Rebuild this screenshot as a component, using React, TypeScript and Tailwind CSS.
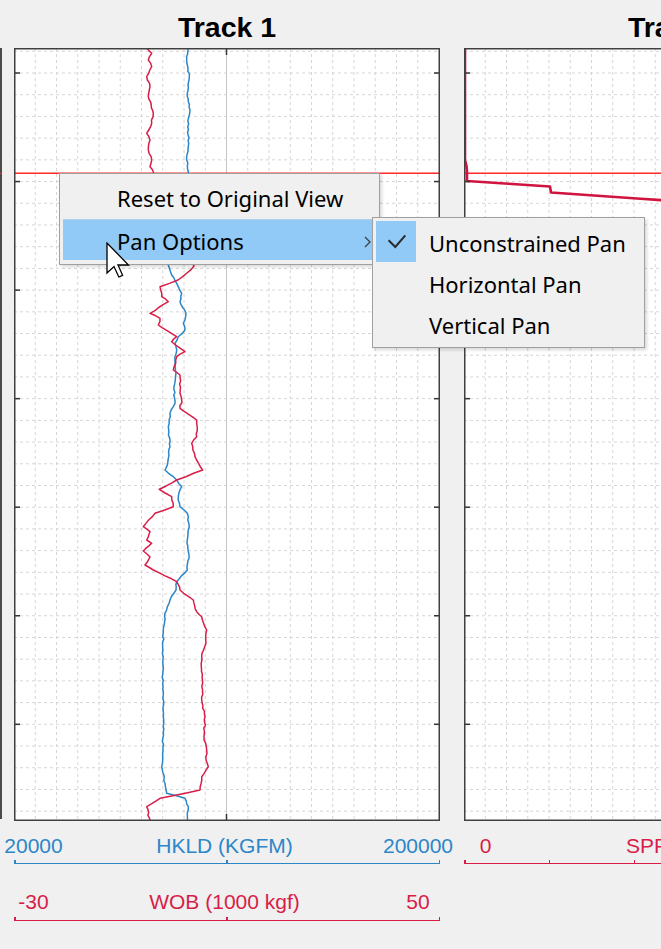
import React from "react";

type Pt = [number, number];

const W = 426;
const H = 773;

// traced from the log, page coordinates
const wob: Pt[] = [
  [146.7, 48], [151.7, 53.3], [148.3, 60], [151.7, 66.7], [146.7, 76.7], [150, 86.7], [148.3, 96.7],
  [153.3, 113.3], [151.7, 123.3], [146.7, 133.3], [150, 140], [148.3, 150], [151.7, 160], [150, 166.7],
  [153.3, 171.7], [160, 200], [185, 240], [194, 266], [186.7, 273.3], [178, 280], [160, 286.7],
  [161.7, 296.7], [168.3, 301.7], [150, 313.3], [160, 318.3], [158.3, 325], [176.7, 336.7], [171.7, 341.7],
  [185, 351.7], [176.7, 356.7], [173.3, 370], [180, 375], [180, 393.3], [181.7, 400], [180, 408.3],
  [196.7, 420], [196.7, 436.7], [191.7, 443.3], [195, 456.7], [202.7, 470], [176.7, 480], [159.3, 489.3],
  [171.7, 496.7], [173.3, 506.7], [155, 513.3], [143.3, 526.7], [150, 531.7], [146.7, 540], [151.7, 543.3],
  [143.3, 551], [150, 557], [145, 565], [153.3, 570], [176.7, 581.7], [180, 590], [193.3, 600],
  [196.7, 611.7], [201.7, 616.7], [206.7, 630], [206, 643.3], [201.7, 656.7], [202.7, 683.3], [201.7, 700],
  [205, 716.7], [204, 736.7], [206.7, 750], [206, 760], [208.3, 766.7], [201.7, 776.7], [200, 790],
  [176.7, 795], [160, 798.3], [146.7, 806.7], [150, 821],
];

const hkld: Pt[] = [
  [188.3, 48], [186.7, 60], [189.3, 76.7], [187.3, 93.3], [190, 110], [187.7, 126.7], [188.7, 143.3],
  [186.7, 160], [188.3, 171.7], [185, 200], [175, 240], [168.3, 265], [171.7, 275], [176.7, 283.3],
  [181.7, 293.3], [180, 301.7], [186, 313.3], [183.3, 323.3], [185, 330], [178.3, 336.7], [175, 343.3],
  [176.7, 350], [175, 360], [176, 373.3], [174, 386.7], [175, 403.3], [170, 413.3], [168.3, 426.7],
  [170, 446.7], [166.7, 466.7], [165, 470], [176.7, 480], [181.7, 486.7], [178.3, 496.7], [180, 506.7],
  [187.3, 513.3], [189.3, 526.7], [187.3, 540], [189, 555], [187.3, 570], [176.7, 581.7], [176, 590],
  [170, 600], [165, 613.3], [163.3, 633.3], [162.7, 683.3], [163.3, 716.7], [162.7, 756.7], [161.7, 766.7],
  [165, 783.3], [166.7, 793.3], [185, 798.3], [188.3, 806.7], [187.3, 821],
];

const spp: Pt[] = [
  [465, 48], [465, 160], [466.5, 166], [467, 172], [467, 181], [550, 186.5], [551, 192.5], [680, 201.5],
];

// fill in small jitter between traced points so the traces look sampled
function trace(pts: Pt[], seed: number, jitter: number) {
  let s = seed;
  const rnd = () => {
    s = (s * 9301 + 49297) % 233280;
    return s / 233280 - 0.5;
  };
  const out: string[] = [];
  for (let i = 0; i < pts.length - 1; i++) {
    const [x0, y0] = pts[i];
    const [x1, y1] = pts[i + 1];
    const n = Math.max(1, Math.round((y1 - y0) / 3));
    for (let k = 0; k < n; k++) {
      const t = k / n;
      const j = k === 0 ? 0 : rnd() * jitter;
      out.push(`${(x0 + (x1 - x0) * t + j).toFixed(1)},${(y0 + (y1 - y0) * t).toFixed(1)}`);
    }
  }
  const last = pts[pts.length - 1];
  out.push(`${last[0]},${last[1]}`);
  return out.join(" ");
}

const cols = Array.from({ length: 19 }, (_, i) => (i + 1) * 21.25);
const rows = Array.from({ length: 36 }, (_, i) => 3.3 + i * 21.71);
const majors = [1, 6, 11, 16, 21, 26, 31].map((i) => 3.3 + i * 21.71);

function Axes({ children, centerLine }: { children: React.ReactNode; centerLine?: boolean }) {
  return (
    <svg width={W} height={H} className="block">
      <rect x={0} y={0} width={W} height={H} fill="#ffffff" />
      {cols.map((x, i) =>
        centerLine && i === 9 ? (
          <line key={x} x1={x} y1={0} x2={x} y2={H} stroke="#c4c4c4" strokeWidth={1} />
        ) : (
          <line key={x} x1={x} y1={0} x2={x} y2={H} stroke="#d6d6d6" strokeWidth={1} strokeDasharray="3 3" />
        )
      )}
      {rows.map((y) => (
        <line key={y} x1={0} y1={y} x2={W} y2={y} stroke="#d6d6d6" strokeWidth={1} strokeDasharray="3 3" />
      ))}
      {children}
      {majors.map((y) => (
        <g key={y} stroke="#333333" strokeWidth={1.5}>
          <line x1={0} y1={y} x2={6} y2={y} />
          <line x1={W - 6} y1={y} x2={W} y2={y} />
        </g>
      ))}
      {centerLine && (
        <g stroke="#333333" strokeWidth={1.5}>
          <line x1={212.5} y1={0} x2={212.5} y2={7} />
          <line x1={212.5} y1={H - 7} x2={212.5} y2={H} />
        </g>
      )}
      <rect x={0.75} y={0.75} width={W - 1.5} height={H - 1.5} fill="none" stroke="#404040" strokeWidth={1.5} />
    </svg>
  );
}

function Scale({
  min,
  label,
  max,
  ticks,
  grid,
  text,
  line,
  bg,
}: {
  min: string;
  label: string;
  max: string;
  ticks: number;
  grid: string;
  text: string;
  line: string;
  bg: string;
}) {
  return (
    <div className={text}>
      <div className={`grid ${grid} h-[21px] text-[21px] leading-none whitespace-nowrap`}>
        <div className="flex justify-center">{min}</div>
        <div className="flex justify-center">{label}</div>
        <div className="flex justify-center">{max}</div>
      </div>
      <div className={`mt-[4.5px] h-[4px] flex justify-between border-b-[1.5px] ${line}`}>
        {Array.from({ length: ticks }, (_, i) => (
          <div key={i} className={`w-[1.5px] h-full ${bg}`} />
        ))}
      </div>
    </div>
  );
}

function Track({ title, children }: { title: string; children: React.ReactNode }) {
  return (
    <div className="w-[426px] shrink-0 flex flex-col">
      <div className="h-[48px] pt-[13px] text-center text-[28.5px] leading-none font-bold text-black whitespace-nowrap">
        {title}
      </div>
      {children}
    </div>
  );
}

function ContextMenu() {
  return (
    <>
      <div className="absolute left-[59px] top-[173px] w-[321px] border border-[#a0a0a0] bg-[#f0f0f0] px-[3px] py-[4px] shadow-[2px_2px_3px_rgba(0,0,0,0.15)] font-['Noto_Sans','Open_Sans',sans-serif] text-[22px] text-black">
        <div className="h-[41px] flex items-center">
          <div className="w-[41px] h-full" />
          <span className="pl-[13px]">Reset to Original View</span>
        </div>
        <div className="h-[41px] flex items-center pt-[3px] bg-[#91c9f7] border-t border-[#b4cde2]">
          <div className="w-[41px] h-full" />
          <span className="pl-[13px]">Pan Options</span>
          <svg width="7" height="12" viewBox="0 0 7 12" className="ml-auto mr-[5px]">
            <polyline points="1,1 6,6 1,11" fill="none" stroke="#404040" strokeWidth="1.3" />
          </svg>
        </div>
      </div>

      <div className="absolute left-[372px] top-[217px] w-[273px] border border-[#a0a0a0] bg-[#f0f0f0] px-[3px] py-[3px] shadow-[2px_2px_3px_rgba(0,0,0,0.15)] font-['Noto_Sans','Open_Sans',sans-serif] text-[22px] text-black">
        <div className="h-[41px] flex items-center">
          <div className="w-[40px] h-full bg-[#91c9f7] flex items-center justify-center">
            <svg width="40" height="41" viewBox="0 0 40 41">
              <polyline points="12.6,19.3 19.3,26 29.3,14.3" fill="none" stroke="#2b2b2b" strokeWidth="2" />
            </svg>
          </div>
          <span className="pl-[13px] pt-[3px]">Unconstrained Pan</span>
        </div>
        <div className="h-[41px] flex items-center">
          <div className="w-[40px] h-full" />
          <span className="pl-[13px] pt-[3px]">Horizontal Pan</span>
        </div>
        <div className="h-[41px] flex items-center">
          <div className="w-[40px] h-full" />
          <span className="pl-[13px] pt-[3px]">Vertical Pan</span>
        </div>
      </div>

      <svg width="26" height="38" viewBox="0 0 26 38" className="absolute left-[106px] top-[242px]">
        <polygon
          points="1,1 1,31 8,24.5 12.8,35 16.6,33.3 12,23 22.5,23"
          fill="#ffffff"
          stroke="#000000"
          strokeWidth="1.3"
          strokeLinejoin="miter"
        />
      </svg>
    </>
  );
}

export default function App() {
  return (
    <div className="relative w-[661px] h-[949px] overflow-hidden bg-[#f0f0f0] font-['Liberation_Sans',Arial,sans-serif]">
      <div className="flex items-start">
        <div className="w-[14px] shrink-0 pt-[48px]">
          <div className="relative w-[2px] h-[771px] bg-[#4a4a4a]">
            <div className="absolute left-0 top-[124.5px] w-[2px] h-[1.5px] bg-[#ff2a2a]" />
          </div>
        </div>

        <Track title="Track 1">
          <Axes centerLine>
            <g transform="translate(-14 -48)" fill="none" strokeWidth={1.5} strokeLinejoin="round">
              <line x1={14} y1={173.3} x2={440} y2={173.3} stroke="#ff2a2a" strokeWidth={1.5} />
              <polyline points={trace(hkld, 7, 1.4)} stroke="#2c86c8" />
              <polyline points={trace(wob, 3, 1.6)} stroke="#d81e48" />
            </g>
          </Axes>
          <div className="mt-[13.5px]">
            <Scale
              min="20000"
              label="HKLD (KGFM)"
              max="200000"
              ticks={3}
              grid="grid-cols-[39px_1fr_44px]"
              text="text-[#2c86c8]"
              line="border-[#2c86c8]"
              bg="bg-[#2c86c8]"
            />
          </div>
          <div className="mt-[27px]">
            <Scale
              min="-30"
              label="WOB (1000 kgf)"
              max="50"
              ticks={3}
              grid="grid-cols-[39px_1fr_44px]"
              text="text-[#d81e48]"
              line="border-[#d81e48]"
              bg="bg-[#d81e48]"
            />
          </div>
        </Track>

        <div className="ml-[24px]">
          <Track title="Track 2">
            <Axes>
              <g transform="translate(-464 -48)" fill="none" strokeLinejoin="round">
                <line x1={464} y1={173.3} x2={890} y2={173.3} stroke="#ff2a2a" strokeWidth={1.5} />
                <polyline points={trace(spp, 5, 0)} stroke="#d0143f" strokeWidth={2.6} />
              </g>
            </Axes>
            <div className="mt-[13.5px]">
              <Scale
                min="0"
                label="SPP (KPA)"
                max="5000"
                ticks={6}
                grid="grid-cols-[43px_1fr_43px]"
                text="text-[#d81e48]"
                line="border-[#d81e48]"
                bg="bg-[#d81e48]"
              />
            </div>
          </Track>
        </div>
      </div>

      <ContextMenu />
    </div>
  );
}
